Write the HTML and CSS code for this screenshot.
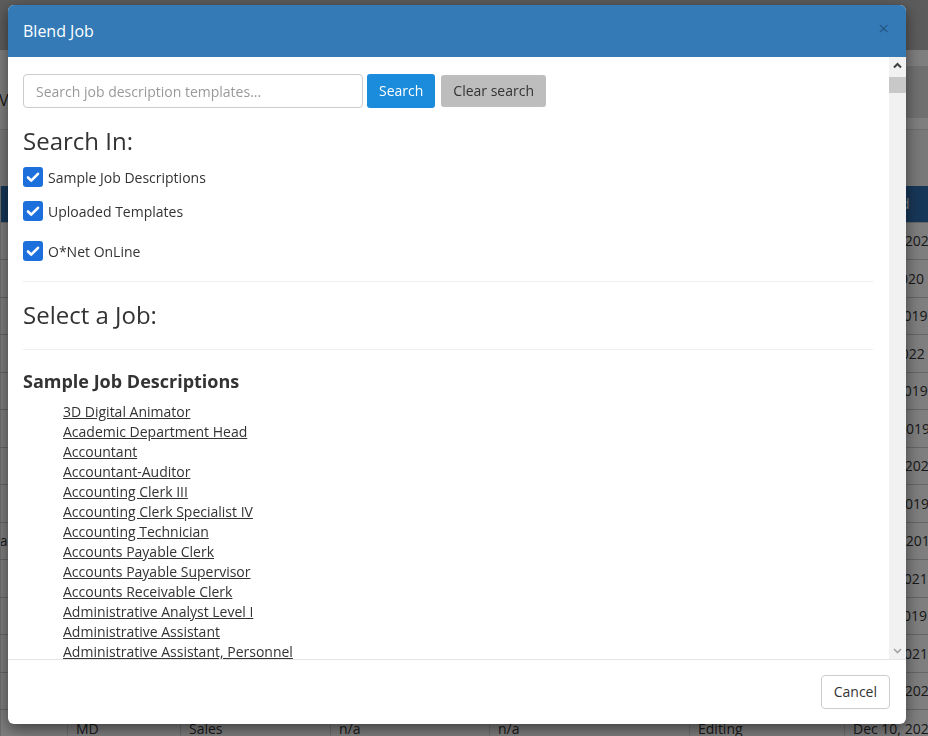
FILE: index.html
```html
<!DOCTYPE html>
<html>
<head>
    <meta charset="utf-8"/>
    <title>Blend Job</title>
    <link rel="stylesheet" href="styles.css">
</head>
<body>
<div class="page">
    <div class="topbar"></div>
    <div class="toolbar">
        <span class="view">View job descriptions</span>
        <span class="tool-box"></span>
    </div>
    <div class="filters"></div>
    <table class="grid">
        <tr class="head"><th>Title</th><th>Dept</th><th>Grade</th><th>FLSA</th><th>Owner</th><th>Status</th><th>Updated</th></tr>
        <tr><td></td><td>HR</td><td>n/a</td><td>n/a</td><td>Admin</td><td>Editing</td><td>Dec 14, 2020</td></tr>
        <tr><td></td><td>IT</td><td>n/a</td><td>n/a</td><td>Admin</td><td>Editing</td><td>Jan 8, 2020</td></tr>
        <tr><td></td><td>Ops</td><td>n/a</td><td>n/a</td><td>Admin</td><td>Final</td><td>Feb 3, 2019</td></tr>
        <tr><td></td><td>Sales</td><td>n/a</td><td>n/a</td><td>Admin</td><td>Editing</td><td>Jun 2, 2022</td></tr>
        <tr><td></td><td>Finance</td><td>n/a</td><td>n/a</td><td>Admin</td><td>Final</td><td>Jul 14, 2019</td></tr>
        <tr><td></td><td>Finance</td><td>n/a</td><td>n/a</td><td>Admin</td><td>Final</td><td>Mar 9, 2019</td></tr>
        <tr><td></td><td>HR</td><td>n/a</td><td>n/a</td><td>Admin</td><td>Editing</td><td>Dec 21, 2020</td></tr>
        <tr><td></td><td>IT</td><td>n/a</td><td>n/a</td><td>Admin</td><td>Final</td><td>Aug 5, 2019</td></tr>
        <tr><td class="cut">Virginia</td><td>Ops</td><td>n/a</td><td>n/a</td><td>Admin</td><td>Final</td><td>Nov 12, 2019</td></tr>
        <tr><td></td><td>Sales</td><td>n/a</td><td>n/a</td><td>Admin</td><td>Editing</td><td>Jul 14, 2021</td></tr>
        <tr><td></td><td>HR</td><td>n/a</td><td>n/a</td><td>Admin</td><td>Final</td><td>Apr 6, 2019</td></tr>
        <tr><td></td><td>IT</td><td>n/a</td><td>n/a</td><td>Admin</td><td>Editing</td><td>Sep 7, 2021</td></tr>
        <tr><td></td><td>Ops</td><td>n/a</td><td>n/a</td><td>Admin</td><td>Editing</td><td>Dec 18, 2020</td></tr>
        <tr><td></td><td>MD</td><td>Sales</td><td>n/a</td><td>n/a</td><td>Editing</td><td>Dec 10, 2020</td></tr>
    </table>
</div>

<div class="backdrop"></div>

<div class="modal">
    <div class="modal-header">
        <span class="modal-title">Blend Job</span>
        <span class="close">&times;</span>
    </div>
    <div class="modal-body">
        <div class="body-inner">
            <div class="search-row">
                <input class="search-input" type="text" placeholder="Search job description templates...">
                <span class="btn btn-search">Search</span>
                <span class="btn btn-clear">Clear search</span>
            </div>
            <h3>Search In:</h3>
            <div class="check first"><span class="box"><svg width="20" height="20" viewBox="0 0 20 20"><path d="M5 10.5l3.2 3.2L15 6.8" fill="none" stroke="#fff" stroke-width="2.6" stroke-linecap="round" stroke-linejoin="round"/></svg></span>Sample Job Descriptions</div>
            <div class="check second"><span class="box"><svg width="20" height="20" viewBox="0 0 20 20"><path d="M5 10.5l3.2 3.2L15 6.8" fill="none" stroke="#fff" stroke-width="2.6" stroke-linecap="round" stroke-linejoin="round"/></svg></span>Uploaded Templates</div>
            <div class="check third"><span class="box"><svg width="20" height="20" viewBox="0 0 20 20"><path d="M5 10.5l3.2 3.2L15 6.8" fill="none" stroke="#fff" stroke-width="2.6" stroke-linecap="round" stroke-linejoin="round"/></svg></span>O*Net OnLine</div>
            <hr>
            <h3>Select a Job:</h3>
            <hr>
            <h4>Sample Job Descriptions</h4>
            <ul class="jobs">
                <li><a href="#">3D Digital Animator</a></li>
                <li><a href="#">Academic Department Head</a></li>
                <li><a href="#">Accountant</a></li>
                <li><a href="#">Accountant-Auditor</a></li>
                <li><a href="#">Accounting Clerk III</a></li>
                <li><a href="#">Accounting Clerk Specialist IV</a></li>
                <li><a href="#">Accounting Technician</a></li>
                <li><a href="#">Accounts Payable Clerk</a></li>
                <li><a href="#">Accounts Payable Supervisor</a></li>
                <li><a href="#">Accounts Receivable Clerk</a></li>
                <li><a href="#">Administrative Analyst Level I</a></li>
                <li><a href="#">Administrative Assistant</a></li>
                <li><a href="#">Administrative Assistant, Personnel</a></li>
                <li><a href="#">Administrative Secretary</a></li>
                <li><a href="#">Administrative Services Manager</a></li>
            </ul>
        </div>
        <div class="scrollbar">
            <span class="arrow"><svg width="17" height="17" viewBox="0 0 17 17"><path d="M5 10.5l3.5-3.5L12 10.5" fill="none" stroke="#404040" stroke-width="2"/></svg></span>
            <span class="thumb"></span>
            <span class="track"></span>
            <span class="arrow"><svg width="17" height="17" viewBox="0 0 17 17"><path d="M5 7l3.5 3.5L12 7" fill="none" stroke="#a3a3a3" stroke-width="1.6"/></svg></span>
        </div>
    </div>
    <div class="modal-footer">
        <span class="btn btn-cancel">Cancel</span>
    </div>
</div>
</body>
</html>
```

FILE: styles.css
```css
* {
    margin: 0;
    padding: 0;
    box-sizing: border-box;
}
body {
    font-family: "Open Sans", "Liberation Sans", sans-serif;
    font-size: 14px;
    color: #333;
    background: #fff;
    overflow: hidden;
}
a {
    color: #333;
}

/* page behind the dialog */
.page {
    width: 928px;
}
.topbar {
    height: 50px;
    background: #b8b8b8;
}
.toolbar {
    height: 80px;
    display: flex;
    align-items: center;
    justify-content: space-between;
    border-bottom: 1px solid #ddd;
}
.view {
    font-size: 16px;
    margin-left: -1px;
    margin-top: 20px;
}
.tool-box {
    width: 60px;
    height: 52px;
    background: #e0e0e0;
    margin-top: 4px;
}
.filters {
    height: 56px;
    background: #f2f2f2;
}
.grid {
    width: 928px;
    border-collapse: collapse;
    table-layout: fixed;
}
.grid th,
.grid td {
    height: 37.5px;
    padding: 0 8px;
    text-align: left;
    white-space: nowrap;
    overflow: hidden;
    border-bottom: 1px solid #ccc;
    border-left: 1px solid #ddd;
    font-weight: normal;
}
.grid tr.head th {
    height: 36px;
    background: #2f6fb0;
    color: #fff;
}
.grid th:nth-child(1), .grid td:nth-child(1) { width: 67px; }
.grid th:nth-child(2), .grid td:nth-child(2) { width: 113px; }
.grid th:nth-child(3), .grid td:nth-child(3) { width: 150px; }
.grid th:nth-child(4), .grid td:nth-child(4) { width: 159px; }
.grid th:nth-child(5), .grid td:nth-child(5) { width: 200px; }
.grid th:nth-child(6), .grid td:nth-child(6) { width: 155px; }
.grid td.cut {
    text-indent: -42px;
    padding-left: 0;
}

.backdrop {
    position: fixed;
    top: 0;
    left: 0;
    right: 0;
    bottom: 0;
    background: rgba(0,0,0,.5);
}

/* dialog */
.modal {
    position: fixed;
    top: 5px;
    left: 8px;
    width: 898px;
    background: #fff;
    border-radius: 6px;
    overflow: hidden;
    box-shadow: 0 5px 15px rgba(0,0,0,.5);
}
.modal-header {
    height: 52px;
    padding: 0 17px 0 15px;
    background: #337ab7;
    display: flex;
    align-items: center;
    justify-content: space-between;
}
.modal-title {
    font-size: 16px;
    color: #fff;
}
.close {
    font-size: 19px;
    color: rgba(0,0,0,.3);
    margin-top: -6px;
}
.modal-body {
    height: 602px;
    display: flex;
}
.body-inner {
    flex: 1;
    overflow: hidden;
    padding: 17px 16px 0 15px;
}
.search-row {
    display: flex;
    align-items: center;
}
.search-input {
    width: 340px;
    height: 34px;
    padding: 6px 12px;
    border: 1px solid #ccc;
    border-radius: 4px;
    font-family: inherit;
    font-size: 14px;
    color: #555;
}
.search-input::placeholder {
    color: #999;
}
.btn {
    display: inline-block;
    font-size: 14px;
    line-height: 20px;
    border-radius: 3px;
}
.btn-search {
    margin-left: 4px;
    padding: 7px 12px;
    background: #1b8cdc;
    color: #fff;
}
.btn-clear {
    margin-left: 6px;
    padding: 6px 12px;
    background: #bdbdbd;
    color: #333;
}
h3 {
    font-size: 24px;
    font-weight: normal;
    line-height: 1.1;
    margin: 20px 0 10px;
}
h4 {
    font-size: 18px;
    font-weight: bold;
    line-height: 1.1;
    margin: 22px 0 10px;
}
hr {
    border: 0;
    border-top: 1px solid #eee;
    margin: 20px 0;
}
.check {
    display: flex;
    align-items: center;
    height: 20px;
    font-size: 14px;
}
.check.first { margin-top: 13px; }
.check.second { margin-top: 14px; }
.check.third { margin-top: 20px; }
.box {
    width: 20px;
    height: 20px;
    border-radius: 3px;
    background: #1d6fdc;
    margin-right: 5px;
    display: flex;
}
.jobs {
    list-style: none;
    padding-left: 40px;
}
.jobs li {
    line-height: 20px;
}
.scrollbar {
    width: 17px;
    background: #f1f1f1;
    display: flex;
    flex-direction: column;
}
.arrow {
    height: 17px;
    display: flex;
}
.thumb {
    height: 16px;
    margin-top: 3px;
    background: #c8c8c8;
}
.track {
    flex: 1;
}
.modal-footer {
    height: 65px;
    border-top: 1px solid #e5e5e5;
    padding: 15px 16px;
    display: flex;
    justify-content: flex-end;
}
.btn-cancel {
    padding: 6px 12px;
    border: 1px solid #ccc;
    border-radius: 4px;
    background: #fff;
    color: #333;
}
```
